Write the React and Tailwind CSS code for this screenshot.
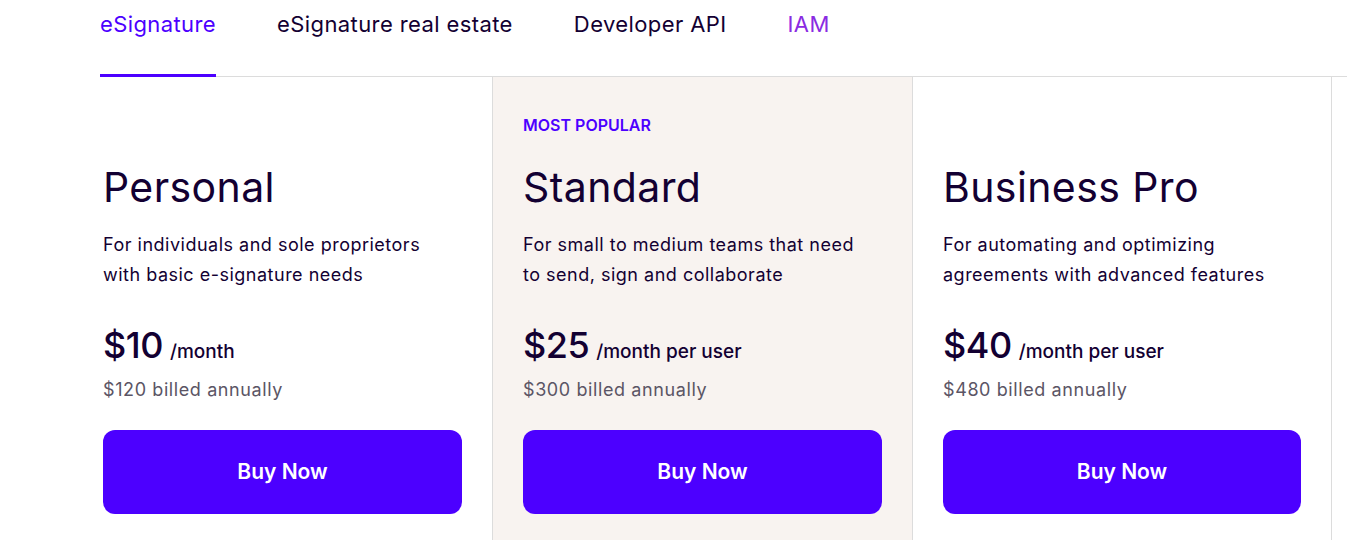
const tabs = [
  { label: "eSignature", active: true },
  { label: "eSignature real estate" },
  { label: "Developer API" },
  { label: "IAM", accent: true },
];

const plans = [
  {
    name: "Personal",
    desc: ["For individuals and sole proprietors", "with basic e-signature needs"],
    price: "$10",
    unit: "/month",
    billed: "$120 billed annually",
  },
  {
    name: "Standard",
    desc: ["For small to medium teams that need", "to send, sign and collaborate"],
    price: "$25",
    unit: "/month per user",
    billed: "$300 billed annually",
    popular: true,
  },
  {
    name: "Business Pro",
    desc: ["For automating and optimizing", "agreements with advanced features"],
    price: "$40",
    unit: "/month per user",
    billed: "$480 billed annually",
  },
];

function PlanCard({ plan, index }) {
  const border =
    index === 1
      ? "border-l border-[#dcdcdc] bg-[#f8f3f0] pl-[30px]"
      : index === 2
      ? "border-l border-r border-[#dcdcdc] pl-[30px]"
      : "pl-[31px]";
  return (
    <div className={`w-[420px] shrink-0 pr-[30px] ${border}`}>
      <div className="h-[60px] pt-[38px] text-[16px] font-semibold uppercase leading-5 text-[#4c00ff]">
        {plan.popular ? "Most Popular" : ""}
      </div>
      <h2 className="mt-[24px] text-[41px] font-normal leading-[52px] tracking-[0.4px] text-[#130032]">
        {plan.name}
      </h2>
      <p className="mt-[17px] text-[18px] leading-[30px] tracking-[0.5px] text-[#130032]">
        {plan.desc[0]}
        <br />
        {plan.desc[1]}
      </p>
      <div className="mt-[33px] flex items-baseline gap-[7px] text-[#130032]">
        <span className="text-[36px] font-medium leading-[44px] tracking-[-0.5px]">{plan.price}</span>
        <span className="text-[19px] font-medium">{plan.unit}</span>
      </div>
      <div className="mt-[9px] text-[18px] leading-7 tracking-[0.6px] text-[#5b5565]">{plan.billed}</div>
      <button
        type="button"
        className="mt-[26px] flex h-[84px] w-full items-center justify-center rounded-xl bg-[#4c00ff] text-[21px] font-semibold text-white"
      >
        Buy Now
      </button>
    </div>
  );
}

export default function App() {
  return (
    <div className="flex h-[540px] w-[1347px] flex-col overflow-hidden bg-white font-['Inter',sans-serif]">
      <nav className="ml-[100px] flex h-[77px] shrink-0 gap-[61px] border-b border-[#dcdcdc]">
        {tabs.map((t) => (
          <div
            key={t.label}
            className={`h-[77px] whitespace-nowrap pt-[9px] text-[22px] leading-[30px] tracking-[0.4px] ${
              t.active
                ? "border-b-[3px] border-[#4c00ff] text-[#4c00ff]"
                : t.accent
                ? "text-[#8a2be2]"
                : "text-[#130032]"
            }`}
          >
            {t.label}
          </div>
        ))}
      </nav>
      <div className="ml-[72px] flex flex-1">
        {plans.map((p, i) => (
          <PlanCard key={p.name} plan={p} index={i} />
        ))}
      </div>
    </div>
  );
}
